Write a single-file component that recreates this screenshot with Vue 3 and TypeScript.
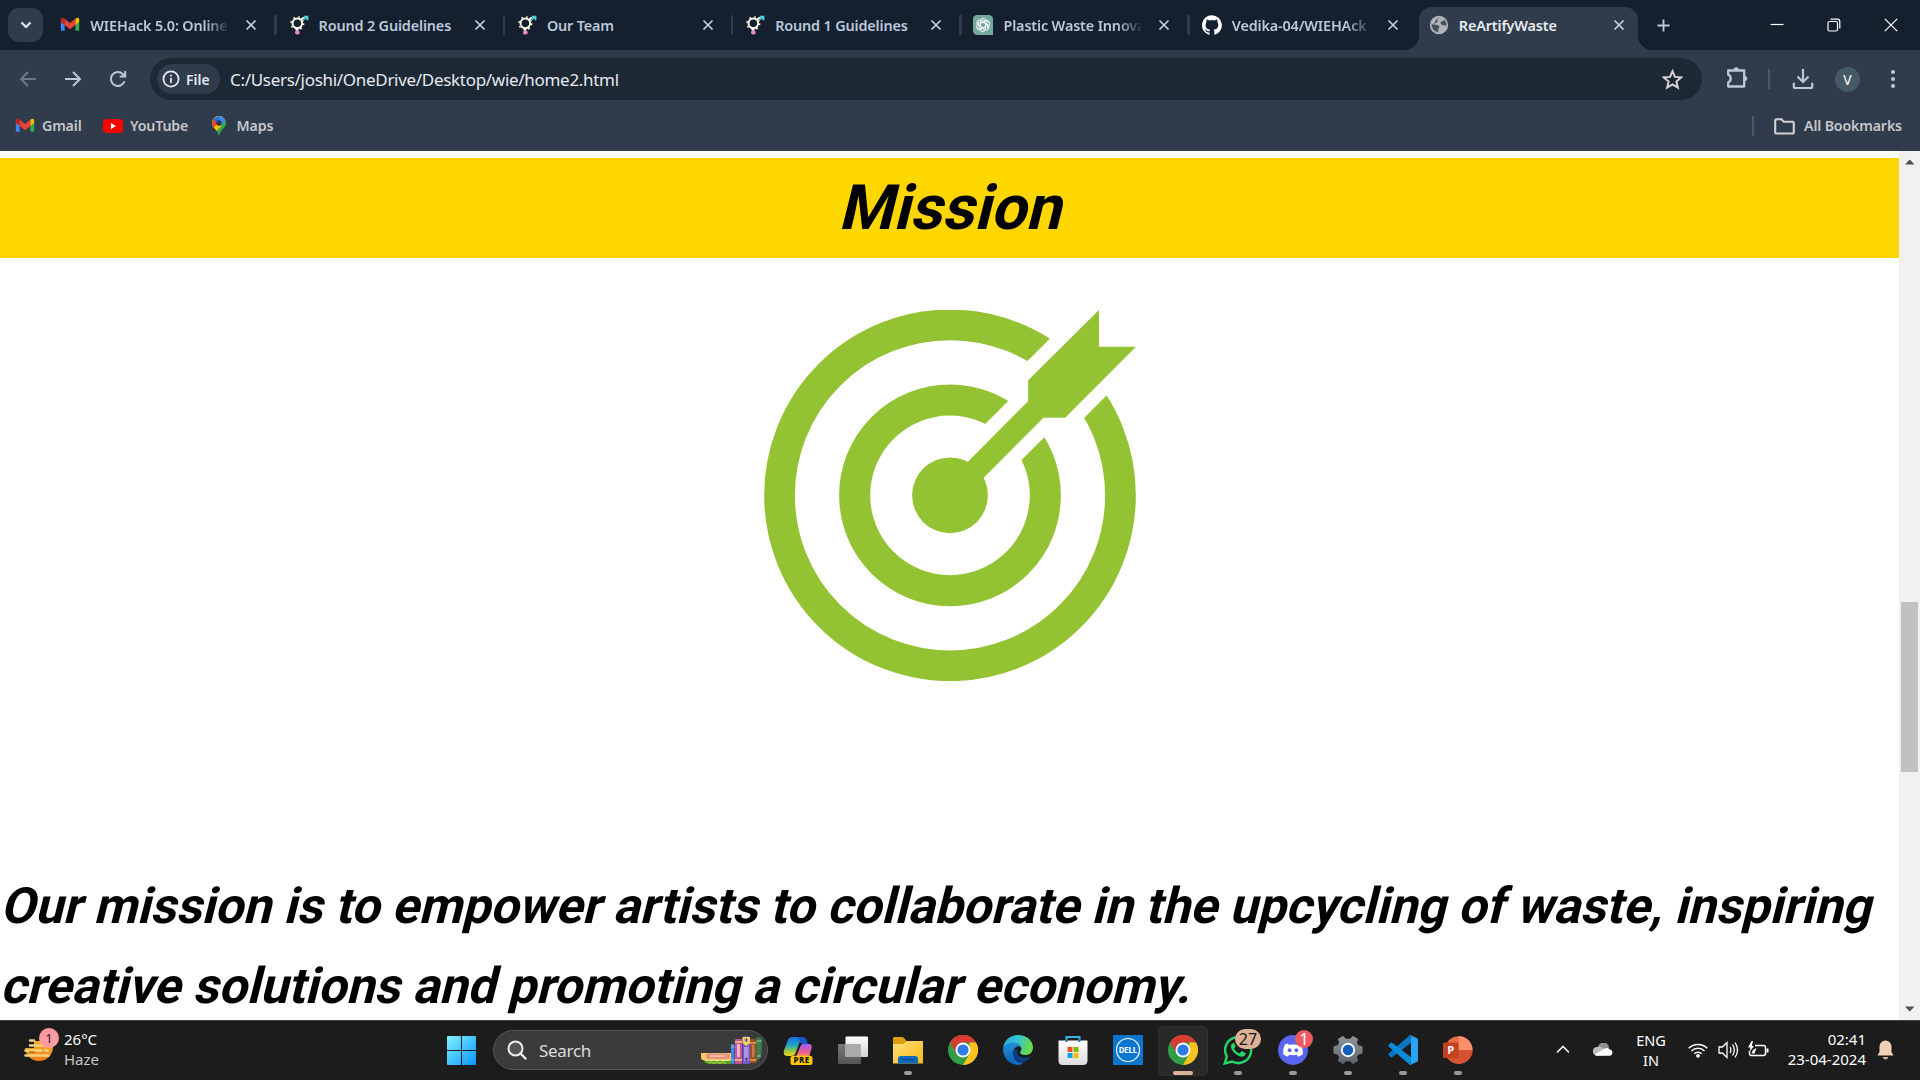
<script setup lang="ts">
interface Tab { title: string; icon: string; fade?: boolean; active?: boolean }
interface App { icon: string; name: string; running?: boolean; active?: boolean; badge?: string; tone?: string }

const gmail = '<path fill="#4285f4" d="M1 5v14h4.600V9z"/><path fill="#34a853" d="M23 5v14h-4.600V9z"/><path fill="#fbbc04" d="M18.400 4.500Q23 1.500 23 6v2.500l-4.600 3.500z"/><path fill="#c5221f" d="M5.600 4.500Q1 1.500 1 6v2.500L5.600 12z"/><path fill="#ea4335" d="M5.600 4.500L12 9.500l6.400-5v7.500L12 17l-6.400-5z"/>'
const gender = '<circle cx="10" cy="10" r="5.800" fill="none" stroke="#fffbe8" stroke-width="2.400"/><circle cx="10" cy="10" r="7.700" fill="none" stroke="#fffbe8" stroke-width="1.600" stroke-dasharray="2.200 3.847"/><path d="M10 16v3" stroke="#fff" stroke-width="2.400"/><path d="M10 18.500v5M7.200 21h5.600" stroke="#e58ad0" stroke-width="2.800"/><path d="M14.500 5.500L18 3" stroke="#fff" stroke-width="2.400"/><path d="M17 .8h6.300v5.400h-2.200V4.200L18.500 6 17 4l1.800-1.400z" fill="#55d0d6"/>'
const gpt = '<path fill="#75a99c" d="M5 0h14a5 5 0 0 1 5 5v19H5a5 5 0 0 1-5-5V5a5 5 0 0 1 5-5z"/><g fill="none" stroke="#fff" stroke-width="1.200">'
  + [0, 60, 120, 180, 240, 300].map(a => `<path d="M8.800 14V7.600a3.700 3.700 0 0 1 6.600-2.300M8.800 10.200L14.400 7l3.400 2" transform="rotate(${a} 12 12)"/>`).join('') + '</g>'
const github = '<path fill="#fff" d="M12 .3a12 12 0 0 0-3.800 23.400c.6.100.8-.3.800-.6v-2.200c-3.300.7-4-1.400-4-1.400-.6-1.400-1.400-1.800-1.400-1.800-1-.7.1-.7.1-.7 1.200.1 1.800 1.200 1.800 1.200 1.100 1.800 2.800 1.300 3.500 1 .1-.8.400-1.300.8-1.600-2.700-.3-5.500-1.300-5.500-5.900 0-1.300.5-2.400 1.200-3.200-.1-.3-.5-1.500.1-3.200 0 0 1-.3 3.300 1.200a11.500 11.500 0 0 1 6 0C17.200 5 18.200 5.300 18.200 5.300c.7 1.700.2 2.900.1 3.200.8.800 1.200 1.900 1.200 3.200 0 4.600-2.800 5.600-5.500 5.900.4.400.8 1.100.8 2.200v3.300c0 .3.200.7.8.6A12 12 0 0 0 12 .3z"/>'
const globe = '<circle cx="12" cy="12" r="11" fill="#b0b4b9"/><path fill="#465160" d="M13 3.200c-.5 1.300-2.500 1-3 2.300-.4 1.200.8 1.600.4 2.600-.5 1.200-3 .7-3.200 2.300-.1 1.100 1 1.500 2.400 1.500 2 0 3 1.400 3 2.600 0 1.100-1.500 1.300-1.500 2.500v3.900A8.900 8.900 0 0 1 3.300 10l3 2.500c0-4.500 2.500-8.400 6.700-9.300zM14.500 8.200l4.500-2.300a9 9 0 0 1 1.900 6.800c-1.300.8-2.100-.5-3.600-.5-1.700 0-3.300-.6-3.300-2.300 0-.8.200-1.300.5-1.700z"/>'

const tabs: Tab[] = [
  { title: 'WIEHack 5.0: Online', icon: gmail, fade: true },
  { title: 'Round 2 Guidelines', icon: gender },
  { title: 'Our Team', icon: gender },
  { title: 'Round 1 Guidelines', icon: gender },
  { title: 'Plastic Waste Innova', icon: gpt, fade: true },
  { title: 'Vedika-04/WIEHAck', icon: github, fade: true },
  { title: 'ReArtifyWaste', icon: globe, active: true },
]

const bookmarks = [
  { name: 'Gmail', icon: gmail },
  { name: 'YouTube', icon: '<rect x="0" y="3.500" width="24" height="17" rx="4.500" fill="#f00"/><path fill="#fff" d="M9.500 8.500v7l6-3.500z"/>' },
  { name: 'Maps', icon: '<clipPath id="pin"><path d="M12 0a8.400 8.400 0 0 0-8.400 8.400c0 6 6.400 7.600 8.400 15.600 2-8 8.400-9.600 8.400-15.600A8.400 8.400 0 0 0 12 0z"/></clipPath><g clip-path="url(#pin)"><path fill="#34a853" d="M0 0h24v24H0z"/><path fill="#fbbc04" d="M2 16L19 0H0z"/><path fill="#fbbc04" d="M3 13l9-4 3 3-8 8z"/><path fill="#ea4335" d="M0 3l6-1 5 6-7 7z"/><path fill="#1a73e8" d="M5 3l4 5 4-3V0z"/><path fill="#4285f4" d="M8 0h12l1 5-9 7-3-4 5-6z"/></g><circle cx="12" cy="8.400" r="3.200" fill="#303b4b"/>' },
]

const mission = [
  'Our mission is to empower artists to collaborate in the upcycling of waste, inspiring',
  'creative solutions and promoting a circular economy.',
]

const chrome = '<circle cx="15" cy="15" r="15" fill="#2f9e46"/><path fill="#dc3a30" d="M2 7.500A15 15 0 0 1 28 7.500H15z"/><path fill="#dc3a30" d="M2 7.500L8.500 18.800 15 7.500z"/><path fill="#fcc31e" d="M28 7.500A15 15 0 0 1 15 30l6.500-11.200L21.500 7.500z"/><circle cx="15" cy="15" r="7.500" fill="#fff"/><circle cx="15" cy="15" r="5.600" fill="#2f7be8"/>'
const apps: App[] = [
  { name: 'copilot', icon: '<defs><linearGradient id="ca" x1="0" y1="0" x2="0" y2="1"><stop offset="0" stop-color="#1b6fe0"/><stop offset=".45" stop-color="#1ea7c8"/><stop offset=".75" stop-color="#9fc83a"/><stop offset="1" stop-color="#f5cc1c"/></linearGradient><linearGradient id="cb" x1="0" y1="0" x2="0" y2="1"><stop offset="0" stop-color="#a05cf0"/><stop offset=".6" stop-color="#ea5c95"/><stop offset="1" stop-color="#fb9653"/></linearGradient></defs><path fill="url(#ca)" d="M9 2h9.500l-5.500 15q-1.200 4-4.500 4H4.500C.5 21 .3 18 1.200 15L5 4.700Q6 2 9 2z"/><path fill="#1756c4" d="M13 2h6.500c2.500 0 3.500 1.500 4.200 3.500L25 9h-4.500c-2.500 0-3.500-1-4-3.500S14.500 2.500 13 2z"/><path fill="url(#cb)" d="M20.500 9H26c2.800 0 3.300 2 2.500 4.500L26 22H13l4.500-11c.6-1.300 1.500-2 3-2z"/><rect x="7.500" y="20.700" width="22" height="9.300" rx="2.500" fill="#fdc60a"/><text x="18.500" y="28.300" text-anchor="middle" font-family="Noto Sans, sans-serif" font-weight="800" font-size="8" fill="#111" letter-spacing=".4">PRE</text>' },
  { name: 'task view', icon: '<defs><linearGradient id="tv" x2="0" y2="1"><stop stop-color="#fff"/><stop offset="1" stop-color="#d0d0d0"/></linearGradient><linearGradient id="tg" x2="0" y2="1"><stop stop-color="#777"/><stop offset="1" stop-color="#555"/></linearGradient></defs><rect x="0" y="9" width="23" height="20" rx="1" fill="url(#tg)"/><rect x="7.500" y="1.500" width="22.500" height="20.500" rx="1" fill="url(#tv)"/><path d="M7.500 9H23v13H7.500z" fill="#aaa"/>' },
  { name: 'explorer', running: true, icon: '<defs><linearGradient id="fo" x2="1" y2="1"><stop stop-color="#ffe07a"/><stop offset="1" stop-color="#fbb91a"/></linearGradient></defs><path fill="#dda00a" d="M0 3.500Q0 2 1.500 2H9q1 0 2 1l2.500 3H28v6H0z"/><path fill="url(#fo)" d="M0 9h9.500Q11 9 12 7.500 13 6 14.500 6H30v22.500H0z"/><path fill="#0f6cbd" d="M5 24q0-3 3-3h14q3 0 3 3v4.500H5z"/><path d="M8.500 24.700h13" stroke="#0b4c86" stroke-width="1.200"/>' },
  { name: 'chrome', icon: chrome },
  { name: 'edge', icon: '<defs><linearGradient id="ea" x2="1" y2=".3"><stop stop-color="#2aa7e4"/><stop offset=".5" stop-color="#33c5d4"/><stop offset="1" stop-color="#68dc4c"/></linearGradient><linearGradient id="eb" x2="0" y2="1"><stop stop-color="#2491d8"/><stop offset="1" stop-color="#0b5cb4"/></linearGradient></defs><path fill="url(#ea)" d="M0 13.500C1 5 7.500 0 15 0c9 0 15 6 15 12.500 0 5-3.500 7.500-7.500 7.500-3.500 0-5.500-1.300-5.500-2.500 0-.8 1.400-1.500 1.400-3.700 0-3-3-5.500-7.400-5.500C6 8.300 1.500 10 0 13.500z"/><path fill="url(#eb)" d="M0 14c1-4.500 5.500-6.500 10-6.500 4.500 0 8 2 8.400 5.500-1-1.500-2.500-2-4-1.500-3 1-5.200 4.500-4.400 9 .8 5 4.500 8.500 7.500 9.200C8 31 0 24 0 14z"/><path fill="#0b3f86" d="M10 17c-1 8 6 12 12 9.500 2.500-1 4.500-3 5.700-5-3 1.600-8 2-11.200 0-2.500-1.500-3-4.500-2-7.500-2 .2-4 1.200-4.500 3z"/><path fill="#0e75c9" d="M9.800 18c0 6.500 5 11 11 9.500-2 2-4.500 2.500-6.500 2-5-1.500-7.500-7-4.500-11.500z"/>' },
  { name: 'store', icon: '<defs><linearGradient id="st" x2="0" y2="1"><stop stop-color="#fff"/><stop offset="1" stop-color="#dcdcdc"/></linearGradient></defs><path fill="none" stroke="#34b4ee" stroke-width="2" d="M8.500 7V2h13v5"/><path fill="url(#st)" d="M.5 5.500h29v20q0 4.500-4.500 4.500H5q-4.500 0-4.500-4.500z"/><path d="M8.500 7V4.500M21.500 7V4.500" stroke="#1a6aa0" stroke-width="2"/><path fill="#f25022" d="M9.500 12h5v5h-5z"/><path fill="#7fba00" d="M15.500 12h5v5h-5z"/><path fill="#00a4ef" d="M9.500 18h5v5h-5z"/><path fill="#ffb900" d="M15.500 18h5v5h-5z"/>' },
  { name: 'dell', icon: '<path fill="#0a76d0" d="M0 0h30v30H0z"/><circle cx="15" cy="15" r="11.500" fill="none" stroke="#fff" stroke-width="1.200"/><text x="15" y="17.600" text-anchor="middle" font-family="Inter, sans-serif" font-weight="800" font-size="7.200" fill="#fff" textLength="18">DELL</text>' },
  { name: 'chrome window', icon: chrome, running: true, active: true },
  { name: 'whatsapp', running: true, badge: '27', tone: 'tan', icon: '<path fill="none" stroke="#25d366" stroke-width="2.500" d="M1.800 28.400l2-7A13 13 0 1 1 9 26.500z"/><path fill="#25d366" d="M10.500 8c-1 0-2.600 1.200-2.600 3.600 0 2.500 2 5 4.200 7 2.500 2.200 5.400 3.400 7.400 3.200 2-.2 3.200-1.700 3.200-3.200 0-.5-.2-.7-.6-.9l-3-1.400c-.4-.2-.7-.2-1 .2l-1.200 1.500c-.3.300-.5.300-.9.200-2-.8-3.700-2.500-4.700-4.300-.2-.4-.1-.6.200-.9l.9-1.200c.2-.3.200-.6.100-.8L11.300 8.500c-.2-.4-.4-.5-.8-.5z"/>' },
  { name: 'discord', running: true, badge: '1', tone: 'red', icon: '<circle cx="15" cy="15" r="15" fill="#5865f2"/><path fill="#fff" d="M10 8.500C8.500 8.800 7.500 9.300 7 9.600 5.500 12.500 4.900 16 5.200 19.300c1.500 1.300 3.200 2 4.700 2.400l1.300-2c2.500.6 5 .6 7.600 0l1.300 2c1.600-.4 3.200-1.100 4.700-2.400.4-3.800-.5-7-1.900-9.700-.6-.4-1.600-.8-3-1.100l-.8 1.400c-2.700-.4-5.500-.4-8.200 0z"/><circle cx="11.600" cy="15.200" r="1.900" fill="#5865f2"/><circle cx="18.400" cy="15.200" r="1.900" fill="#5865f2"/>' },
  { name: 'settings', running: true, icon: '<defs><linearGradient id="ge" x2="0" y2="1"><stop stop-color="#8d9499"/><stop offset="1" stop-color="#5d656b"/></linearGradient></defs><path fill="url(#ge)" stroke="url(#ge)" stroke-width="1.500" stroke-linejoin="round" d="M12.500 4.500L10 1.800 5.800 4.200l1 3.700L5 11l-3.800 1v6l3.800 1 1.800 3.100-1 3.700L10 28.200l2.500-2.700h5l2.500 2.700 4.200-2.400-1-3.700L25 19l3.800-1v-6L25 11l-1.800-3.100 1-3.700L20 1.800l-2.500 2.700z"/><circle cx="15" cy="15" r="6.200" fill="#0f60b8" stroke="#f5f7fa" stroke-width="1.900"/>' },
  { name: 'code', running: true, icon: '<path fill="#0877c4" d="M22 0L1 18.300q-1.200 1 0 2.200l1.500 1.400q1 .8 2 0L24 7z"/><path fill="#0a8bd8" d="M22 30L1 11.700q-1.200-1 0-2.200L2.500 8q1-.8 2 0L24 23z"/><path fill="#27a5f2" d="M21.500.3Q22 0 22.700.3L29 3.200q1 .5 1 1.500v20.600q0 1-1 1.500l-6.300 2.900q-.7.300-1.200 0 1.500-.8 1.500-2.200V2.500Q23 1 21.500.3z"/>' },
  { name: 'slides', running: true, icon: '<circle cx="15.700" cy="15" r="13.800" fill="#ed6c47"/><path fill="#ff8f6b" d="M15.700 1.200A13.800 13.800 0 0 1 29.500 15H15.700z"/><path fill="#d35230" d="M1.900 15h27.600a13.800 13.800 0 0 1-27.600 0z"/><rect x="0" y="7.500" width="15.500" height="15.500" rx="1.500" fill="#c3411f"/><text x="7.700" y="19.200" text-anchor="middle" font-family="Open Sans, sans-serif" font-weight="700" font-size="11" fill="#fff">P</text>' },
]
</script>

<template>
  <div class="screen">
    <header class="strip">
      <div class="search-tabs"><svg width="14" height="10" viewBox="0 0 14 10"><path d="M2.500 2.500L7 7l4.500-4.500" fill="none" stroke="#e3e8f0" stroke-width="2.200" /></svg></div>
      <div v-for="(t, i) in tabs" :key="i" class="tab" :class="{ active: t.active, quiet: i === 5 }">
        <svg class="fav" viewBox="0 0 24 24" v-html="t.icon" />
        <span class="title" :class="{ fade: t.fade }">{{ t.title }}</span>
        <svg class="x" viewBox="0 0 12 12"><path d="M1.500 1.500l9 9m0-9l-9 9" /></svg>
      </div>
      <svg class="plus" viewBox="0 0 14 14"><path d="M7 .5v13M.5 7h13" /></svg>
      <div class="controls">
        <svg viewBox="0 0 14 14"><path d="M.5 6.500h13" /></svg>
        <svg viewBox="0 0 14 14"><rect x="1" y="3.500" width="9.500" height="9.500" rx="1.500" /><path d="M3.500 1.200h7q2.300 0 2.300 2.300v7" /></svg>
        <svg viewBox="0 0 14 14"><path d="M.8.8l12.400 12.400m0-12.400L.8 13.200" /></svg>
      </div>
    </header>

    <div class="toolbar">
      <svg class="nav dim" viewBox="0 0 20 20"><path d="M18 10H3m7-7l-7 7 7 7" /></svg>
      <svg class="nav" viewBox="0 0 20 20"><path d="M2 10h15M10 3l7 7-7 7" /></svg>
      <svg class="nav" viewBox="0 0 20 20"><path d="M16.500 12.200A7 7 0 1 1 14.800 5l2.200 2.300M17.200 2v5.500h-5.500" /></svg>
      <div class="omnibox">
        <div class="chip">
          <svg width="18" height="18" viewBox="0 0 18 18"><circle cx="9" cy="9" r="7.600" fill="none" stroke="#e3e8f0" stroke-width="1.800" /><path d="M9 8v5M9 4.800v1.800" stroke="#e3e8f0" stroke-width="1.800" /></svg>
          <span>File</span>
        </div>
        <span class="url">C:/Users/joshi/OneDrive/Desktop/wie/home2.html</span>
        <svg class="star" viewBox="0 0 20 20"><path d="M10 2l2.300 5.500 6 .5-4.600 3.900 1.400 5.900L10 14.700l-5.100 3.100 1.400-5.900L1.700 8l6-.5z" /></svg>
      </div>
      <svg class="ext" viewBox="0 0 22 22"><path fill="none" d="M2.200 3.500h16v16h-16v-4.200q2.500-.8 2.500-3.800T2.200 7.700z" /><path class="solid" d="M7.500 3a2.700 2.700 0 0 1 5.400 0zM18.500 8.800a2.700 2.700 0 0 1 0 5.400z" /></svg>
      <i class="bar" />
      <svg class="down" viewBox="0 0 22 22"><path d="M11 1v13M5.500 8.500L11 14l5.500-5.500M1.800 14.800v3.700q0 1.500 1.500 1.500h15.400q1.500 0 1.500-1.500v-3.700" /></svg>
      <span class="avatar">V</span>
      <svg class="dots" viewBox="0 0 6 20"><circle cx="3" cy="3" r="2" /><circle cx="3" cy="10" r="2" /><circle cx="3" cy="17" r="2" /></svg>
    </div>

    <nav class="bookmarks">
      <div v-for="b in bookmarks" :key="b.name" class="bm" :class="b.name.toLowerCase()">
        <svg viewBox="0 0 24 24" v-html="b.icon" /><span>{{ b.name }}</span>
      </div>
      <i class="bar end" />
      <svg class="folder" viewBox="0 0 21 17"><path d="M1.200 14V2.700q0-1.500 1.500-1.500h4.800l2.300 2.600h8.500q1.500 0 1.500 1.500V14q0 1.500-1.500 1.500H2.700q-1.500 0-1.500-1.500z" /></svg>
      <span class="all">All Bookmarks</span>
    </nav>

    <div class="viewport">
      <main class="page">
        <h1><span>Mission</span></h1>
        <svg class="target" viewBox="73 60 1114 1111">
          <g fill="none" stroke="#93c232">
            <circle cx="630" cy="615" r="510.500" stroke-width="92" />
            <path d="M630 615L1240 5" stroke="#fff" stroke-width="240.500" />
            <circle cx="630" cy="615" r="285.500" stroke-width="93" />
            <path d="M630 615L940 305" stroke="#fff" stroke-width="153" />
          </g>
          <g fill="#93c232">
            <circle cx="630" cy="615" r="113.500" />
            <path d="M1076 60V170H1187L975 383H910L730 563 660 590 683 515 864 333V270z" />
          </g>
        </svg>
        <p><span v-for="line in mission" :key="line">{{ line }}</span></p>
      </main>
      <aside class="scroll">
        <svg viewBox="0 0 21 21"><path d="M6 13.500h9.500l-4.750-5z" /></svg>
        <div class="thumb" />
        <svg viewBox="0 0 21 21"><path d="M6 7.500h9.500l-4.750 5z" /></svg>
      </aside>
    </div>

    <footer class="taskbar">
      <div class="weather">
        <div class="haze">
          <svg width="32" height="34" viewBox="0 0 32 34">
            <defs><linearGradient id="sun" x2="0" y2="1"><stop stop-color="#f8c630" /><stop offset="1" stop-color="#f07c18" /></linearGradient></defs>
            <circle cx="15" cy="17" r="14" fill="url(#sun)" />
            <path d="M0 0h32v11H0zM0 11h10v7H0z" fill="#1c1c1c" />
            <path d="M6 10.500h4M6 15.500h20M1.500 20.500h16M21 20.500h3M1.500 25.500h23" stroke="#f3d27c" stroke-width="2.600" stroke-linecap="round" /><path d="M5 22h6" stroke="#8a5a20" stroke-width="1" />
          </svg>
          <b class="one">1</b>
        </div>
        <div class="readout"><span>26°C</span><span class="muted">Haze</span></div>
      </div>
      <div class="dock">
        <div class="slot">
          <svg width="29" height="29" viewBox="0 0 29 29"><defs><linearGradient id="win" gradientUnits="userSpaceOnUse" x1="0" y1="0" x2="29" y2="29"><stop stop-color="#80f2ff" /><stop offset="1" stop-color="#0a94ff" /></linearGradient></defs><path fill="url(#win)" d="M0 1q0-1 1-1h13v14H0zM15 0h13q1 0 1 1v13H15zM0 15h14v14H1q-1 0-1-1zM15 15h14v13q0 1-1 1H15z" /></svg>
        </div>
        <div class="search">
          <svg width="20" height="20" viewBox="0 0 20 20"><circle cx="8.500" cy="8.500" r="7" fill="#555" stroke="#eee" stroke-width="2" /><path d="M13.500 13.500l5 5" stroke="#eee" stroke-width="2.400" stroke-linecap="round" /></svg>
          <span>Search</span>
          <svg class="books" width="63" height="30" viewBox="0 0 63 30">
            <path fill="#f3cf62" d="M1 18h30v7H3q-2 0-2-3z" /><rect x="6" y="18.500" width="24" height="5.500" rx="2" fill="#e8937c" /><path d="M10 21h15" stroke="#f5b7a5" stroke-width="2" />
            <path fill="#5c9e24" d="M3 25h28v4H10q-5 0-7-4z" /><path d="M5 25.500h25" stroke="#e8e29c" /><path d="M8 28l3-1 3 1.500 3-1.500 3 1.500 3-1.500 3 1.500" fill="none" stroke="#9bc93f" stroke-width="1.300" />
            <rect x="31" y="9" width="3.500" height="20" fill="#3f86e0" /><path d="M31 12h3.500M31 25h3.500" stroke="#8fbcf5" />
            <rect x="35" y="4" width="7" height="25" rx="1" fill="#c2559a" /><path d="M35 7h7M35 25h7" stroke="#f4d06a" stroke-width="1.500" /><rect x="37" y="9" width="3" height="13" fill="#eeb0d5" />
            <rect x="42.500" y="1.500" width="7.500" height="27.500" rx="1" fill="#7757c5" /><path fill="#f4d06a" d="M42.500 2h7.500v6l-3.700 3-3.800-3z" /><path d="M46.300 3v4M44.500 5h3.600" stroke="#60439f" /><path fill="#ab93e6" d="M44 12h4.500v14H44z" /><path d="M46.300 22v4M44.500 24h3.600" stroke="#4a3289" />
            <rect x="50" y="4" width="6.500" height="24" rx="1" fill="#9c4e24" /><path d="M50 8h6.500M50 25h6.500" stroke="#e3b043" stroke-width="1.500" /><path fill="#c77c48" d="M52 10h2.500v12H52z" />
            <path fill="#3a8052" d="M56.500 3q3-2 5 1 1 11-1 18-1 3-4 3z" /><path d="M56.500 6h5.200M57 21h4" stroke="#a7cfa0" />
          </svg>
        </div>
        <div v-for="a in apps" :key="a.name" class="slot" :class="{ on: a.active }">
          <svg width="30" height="30" viewBox="0 0 30 30" v-html="a.icon" />
          <b v-if="a.badge" class="badge" :class="a.tone">{{ a.badge }}</b>
          <i v-if="a.running" class="run" />
        </div>
      </div>
      <div class="tray">
        <svg class="chev" width="14" height="9" viewBox="0 0 14 9"><path d="M1 7.500l6-6 6 6" fill="none" stroke="#eee" stroke-width="1.700" /></svg>
        <svg class="cloud" width="20" height="13" viewBox="0 0 20 13"><path fill="#8f8f8f" d="M5 5a5.500 5.500 0 0 1 11 0l-6 4z" /><path fill="#bdbdbd" d="M4 12.500A4.200 4.200 0 0 1 4 4q4-1.800 7 2l3 6z" /><path fill="#fff" d="M1.500 11.500L11 6q3-2 6 .5a3.200 3.200 0 0 1-.5 6.300H4q-1.600 0-2.500-1.300z" /></svg>
        <div class="lang"><span>ENG</span><span>IN</span></div>
        <svg class="wifi" width="20" height="16" viewBox="0 0 20 16"><g fill="none" stroke="#fff" stroke-width="1.500"><path d="M.7 6.300a13.200 13.200 0 0 1 18.600 0M3.500 9a9.200 9.200 0 0 1 13 0M6.300 11.800a5.300 5.300 0 0 1 7.400 0" /></g><circle cx="10" cy="13.800" r="1.900" fill="#fff" /></svg>
        <svg class="vol" width="21" height="18" viewBox="0 0 21 18"><g fill="none" stroke="#fff" stroke-width="1.300"><path d="M1 6h3.300l4.700-4.500v15L4.300 12H1zM12 6q1.800 3 0 6M14.500 3.500q3.600 5.500 0 11M17 1.500q5 7.500 0 15" /></g></svg>
        <svg class="batt" width="21" height="18" viewBox="0 0 21 18"><path d="M7 4.500h8.500q2 0 2 2v6q0 2-2 2h-12q-2 0-2-2V10" fill="none" stroke="#fff" stroke-width="1.500" /><path d="M18.500 7.500h2v4h-2z" fill="#fff" /><path fill="#fff" d="M3.500 0L0 6.500h2.500L1.500 11 6 5H3.800L5 0zM3.500 12.500h3L8.500 7 5 9z" /></svg>
        <div class="clock"><span>02:41</span><span>23-04-2024</span></div>
        <svg class="bell" width="17" height="20" viewBox="0 0 17 20"><path fill="#f0d0b8" d="M8.500.5a6 6 0 0 1 6 6V12l2 3.500H.5l2-3.500V6.500a6 6 0 0 1 6-6z" /><path fill="#cdb19c" d="M5.500 17h6q-1 2.500-3 2.500t-3-2.500z" /></svg>
      </div>
    </footer>
  </div>
</template>

<style>
body { margin: 0; overflow: hidden; }
</style>

<style scoped>
.screen { width: 1920px; height: 1080px; display: flex; flex-direction: column; overflow: hidden; font-family: "Noto Sans", "Open Sans", sans-serif; background: #303b4b; }
.screen * { box-sizing: border-box; }
svg { display: block; flex: none; }
.strip { height: 50px; flex: none; display: flex; align-items: center; background: #15202f; position: relative; }
.search-tabs { width: 35px; height: 34px; margin: 0 4px 0 8px; border-radius: 11px; background: #303b4b; display: flex; align-items: center; justify-content: center; }
.tab { width: 228.300px; height: 50px; flex: none; display: flex; align-items: center; position: relative; color: #bcc8da; }
.tab::after { content: ""; position: absolute; right: -1.500px; top: 15px; width: 2.500px; height: 20px; background: #303b4b; border-radius: 1px; }
.tab.active::after, .tab.quiet::after { display: none; }
.fav { width: 20px; height: 20px; margin: 0 10px 0 13.300px; }
.title { width: 138px; margin-right: 17px; white-space: nowrap; font-size: 14.400px; font-weight: 600; letter-spacing: -.15px; }
.fade { -webkit-mask-image: linear-gradient(90deg, #000 114px, transparent 141px); mask-image: linear-gradient(90deg, #000 114px, transparent 141px); }
.x { width: 12px; height: 12px; fill: none; stroke: #c5cfdf; stroke-width: 1.700; }
.active { width: 219px; height: 43px; margin-left: 2px; align-self: flex-end; padding-bottom: 7px; background: #303b4b; border-radius: 13px 13px 0 0; color: #e8ecf3; }
.active .fav { margin-left: 10px; }
.active .title { margin-right: 16px; }
.active::before { content: ""; position: absolute; left: -15px; right: -15px; bottom: 0; height: 15px; background: radial-gradient(circle at 0 0, transparent 15px, #303b4b 15.500px) left / 15px 15px no-repeat, radial-gradient(circle at 100% 0, transparent 15px, #303b4b 15.500px) right / 15px 15px no-repeat; }
.plus { width: 13px; height: 13px; margin-left: 19px; stroke: #bcc8da; stroke-width: 2; }
.controls { margin-left: auto; margin-right: 22px; display: flex; gap: 43px; fill: none; stroke: #fff; stroke-width: 1.200; }
.controls svg { width: 14px; height: 14px; }
.toolbar { height: 58px; flex: none; display: flex; align-items: center; padding-left: 17.500px; }
.nav { width: 20px; height: 20px; margin-right: 25px; fill: none; stroke: #bcc8da; stroke-width: 2; }
.nav.dim { stroke: #6d7786; }
.omnibox { width: 1552px; height: 42px; margin-left: -2.500px; border-radius: 21px; background: #1c2834; display: flex; align-items: center; padding-left: 7px; flex: none; }
.chip { width: 63px; height: 30px; border-radius: 15px; background: #303b4b; display: flex; align-items: center; gap: 6px; padding-left: 5px; color: #e3e8f0; font-size: 14px; font-weight: 600; }
.url { margin-left: 10px; font-size: 17px; color: #e6eaf0; white-space: nowrap; letter-spacing: -.3px; }
.star { width: 21px; height: 21px; margin-left: auto; margin-right: 19px; fill: none; stroke: #d5cfd6; stroke-width: 1.900; }
.ext { width: 22px; height: 22px; margin-left: 23.500px; margin-top: -2px; fill: #bcc8da; stroke: #bcc8da; stroke-width: 2.300; stroke-linejoin: round; }
.solid { stroke: none; }
.bar { width: 2px; height: 20px; background: #4c5869; margin-left: 20.500px; }
.down { width: 22px; height: 22px; margin-left: 21.500px; fill: none; stroke: #bcc8da; stroke-width: 2.200; }
.avatar { width: 25px; height: 25px; margin-left: 21.500px; border-radius: 50%; background: #455a64; color: #fff; font-size: 14px; display: flex; align-items: center; justify-content: center; }
.dots { width: 6px; height: 20px; margin-left: 29.500px; fill: #bcc8da; }
.bookmarks { height: 43px; flex: none; display: flex; align-items: center; padding-bottom: 7px; color: #c6c8cc; font-size: 14.200px; font-weight: 600; letter-spacing: -.15px; }
.bookmarks span { margin-top: -2px; }
.bm { display: flex; align-items: center; }
.bm svg { width: 20px; height: 20px; }
.gmail { width: 87px; padding-left: 15px; gap: 7px; }
.youtube { width: 108px; padding-left: 16px; gap: 7px; }
.maps { padding-left: 14px; gap: 7.500px; }
.end { margin-left: auto; }
.folder { width: 21px; height: 17px; margin-left: 19.500px; fill: none; stroke: #d5cfd6; stroke-width: 2.100; }
.all { width: 99px; margin: 0 17px 0 9.500px; white-space: nowrap; }
.viewport { height: 869px; flex: none; display: flex; background: #fff; }
.page { width: 1899px; padding-top: 7px; overflow: hidden; font-family: Roboto, sans-serif; font-weight: 700; color: #000; }
h1 { margin: 0; height: 100px; background: #ffd700; text-align: center; font: inherit; font-size: 62.500px; line-height: 100px; }
h1 span { display: inline-block; transform: skewX(-14deg); transform-origin: 0 71px; }
.target { width: 372px; height: 371px; margin: 52px auto 0; }
p { margin: 185px 0 0; font-size: 50px; line-height: 80px; white-space: nowrap; }
p span { display: block; width: fit-content; transform: skewX(-14deg); transform-origin: 0 57px; }
.scroll { width: 21px; background: #f1f1f1; display: flex; flex-direction: column; }
.scroll svg { width: 21px; height: 21px; fill: #505050; }
.thumb { margin: 430px 2px auto; height: 170px; background: #c1c1c1; }
.taskbar { height: 60px; flex: none; background: #1c1c1c; border-top: 1px solid #3d4140; display: flex; color: #fff; font-size: 15px; }
.weather { width: 434px; display: flex; padding: 8px 0 0 24px; }
.haze { position: relative; width: 40px; padding-top: 1px; }
.one { position: absolute; left: 15px; top: -1px; width: 20px; height: 20px; border-radius: 50%; background: #ff99a4; color: #222; font-size: 13px; font-weight: 400; line-height: 20px; text-align: center; }
.readout, .lang, .clock { display: flex; flex-direction: column; line-height: 20px; }
.muted { color: #c8c8c8; }
.dock { display: flex; height: 59px; align-items: center; }
.slot { width: 55px; height: 50px; position: relative; display: flex; align-items: center; justify-content: center; flex: none; }
.on::before { content: ""; position: absolute; inset: 0 2.500px; background: #292929; border: 1px solid #313131; border-radius: 5px; }
.on svg { position: relative; }
.slot svg { margin-top: -1px; }
.run { position: absolute; left: 23.500px; bottom: 1px; width: 8px; height: 4px; border-radius: 2px; background: #9a9a9a; }
.on .run { left: 17.500px; width: 20px; background: #dcb296; }
.badge { position: absolute; top: 3px; height: 20px; border-radius: 10px; font-size: 16px; line-height: 20px; font-weight: 400; text-align: center; }
.tan { left: 25px; width: 26px; background: #dcb296; color: #1a1a1a; }
.red { left: 30px; width: 18px; height: 18px; line-height: 18px; top: 4px; background: #ee5a60; color: #fff; }
.search { width: 275px; height: 40px; margin: -1px 2px 0 4px; border-radius: 20px; background: #3b3b3b; border: 1px solid #555; display: flex; align-items: center; padding-left: 13px; font-size: 17px; color: #ddd; flex: none; }
.search span { margin-left: 12px; letter-spacing: -.3px; }
.books { margin: 0 4px 0 auto; }
.tray { flex: 1; display: flex; align-items: center; padding-bottom: 2px; }
.chev { margin-left: 71px; }
.cloud { margin-left: 23px; }
.lang { width: 50px; margin-left: 13px; text-align: center; font-size: 14.500px; }
.wifi { margin-left: 12px; }
.vol { margin-left: 10px; }
.batt { margin-left: 9px; }
.clock { width: 98px; margin-left: -1px; padding-bottom: 1px; text-align: right; }
.bell { margin-left: 11px; }
</style>
